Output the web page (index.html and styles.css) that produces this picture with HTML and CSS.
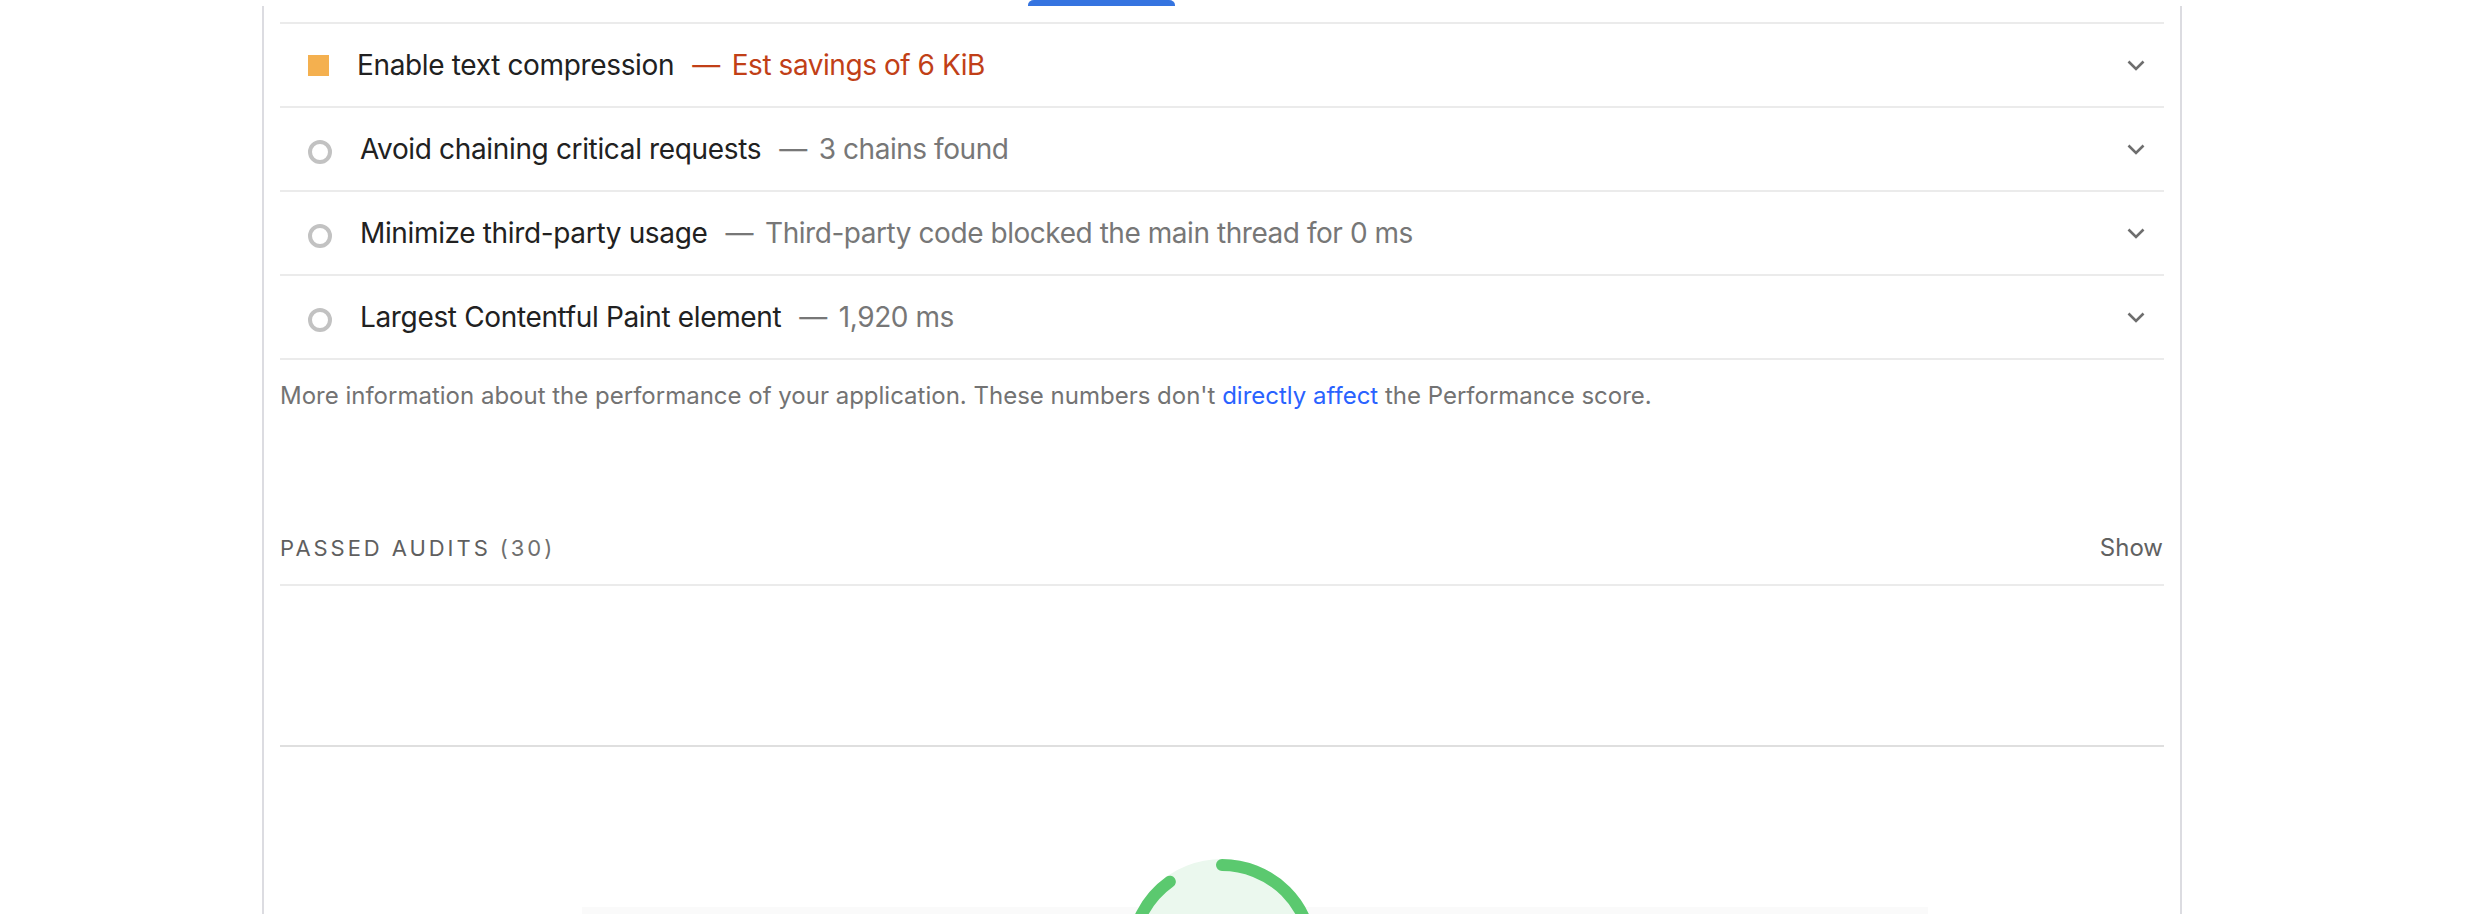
FILE: index.html
```html
<!DOCTYPE html>
<html lang="en">
<head>
<meta charset="utf-8">
<title>Lighthouse report – diagnostics</title>
<link rel="stylesheet" href="styles.css">
</head>
<body>
<div class="tabbar"><div class="tab-indicator"></div></div>
<div class="report">
  <div class="audit-list">
    <div class="audit">
      <span class="icon-square"></span>
      <span class="audit-title">Enable text compression</span><span class="display warn"><span class="dash">—</span>Est savings of 6 KiB</span>
      <svg class="chevron" width="18" height="11" viewBox="0 0 18 11"><polyline points="1.5,1.5 9,9 16.5,1.5"/></svg>
    </div>
    <div class="audit">
      <span class="icon-circle"></span>
      <span class="audit-title">Avoid chaining critical requests</span><span class="display"><span class="dash">—</span>3 chains found</span>
      <svg class="chevron" width="18" height="11" viewBox="0 0 18 11"><polyline points="1.5,1.5 9,9 16.5,1.5"/></svg>
    </div>
    <div class="audit">
      <span class="icon-circle"></span>
      <span class="audit-title">Minimize third-party usage</span><span class="display"><span class="dash">—</span>Third-party code blocked the main thread for 0 ms</span>
      <svg class="chevron" width="18" height="11" viewBox="0 0 18 11"><polyline points="1.5,1.5 9,9 16.5,1.5"/></svg>
    </div>
    <div class="audit">
      <span class="icon-circle"></span>
      <span class="audit-title">Largest Contentful Paint element</span><span class="display"><span class="dash">—</span>1,920 ms</span>
      <svg class="chevron" width="18" height="11" viewBox="0 0 18 11"><polyline points="1.5,1.5 9,9 16.5,1.5"/></svg>
    </div>
  </div>
  <p class="group-description">More information about the performance of your application. These numbers don't <a class="link" href="#">directly affect</a> the Performance score.</p>
  <div class="clump-header">
    <span class="clump-title">Passed audits <span class="clump-count">(30)</span></span>
    <span class="clump-toggle">Show</span>
  </div>
  <div class="section-divider"></div>
  <div class="category-header">
    <div class="faint-band"></div>
    <svg class="gauge" width="192" height="192" viewBox="0 0 192 192">
      <circle class="gauge-base" cx="96" cy="96" r="90"/>
      <circle class="gauge-arc" cx="96" cy="96" r="90" transform="rotate(-90 96 96)" stroke-dasharray="509 566"/>
    </svg>
  </div>
</div>
</body>
</html>
```
FILE: styles.css
```css
html, body {
  margin: 0;
  padding: 0;
  background: #ffffff;
  height: 914px;
  overflow: hidden;
}

body {
  font-family: Inter, Roboto, "Liberation Sans", Arial, sans-serif;
  color: #212121;
}

.tabbar {
  height: 6px;
  display: flex;
}

.tab-indicator {
  margin-left: 1028px;
  width: 147px;
  height: 6px;
  background: #3574e0;
  border-top-left-radius: 6px 5px;
  border-top-right-radius: 6px 5px;
}

.report {
  margin-left: 262px;
  width: 1884px;
  padding: 16px 16px 0;
  border-left: 2px solid #dcdce1;
  border-right: 2px solid #dcdce1;
  min-height: 900px;
}

.audit-list {
  border-top: 2px solid #ebebeb;
}

.audit {
  display: flex;
  align-items: center;
  height: 82px;
  border-bottom: 2px solid #ebebeb;
  padding-left: 28px;
  font-size: 28px;
  white-space: nowrap;
}

.icon-square {
  width: 21px;
  height: 21px;
  background: #f4b04f;
  margin-right: 28px;
  flex: none;
}

.icon-circle {
  width: 16px;
  height: 16px;
  border: 4px solid #c2c2c2;
  border-radius: 50%;
  margin-right: 28px;
  margin-top: 5px;
  flex: none;
}

.audit-title {
  color: #212121;
  letter-spacing: -0.35px;
}

.display {
  color: #777777;
  letter-spacing: -0.45px;
}

.display.warn {
  color: #c13f17;
}

.dash {
  margin-left: 18px;
  margin-right: 12px;
}

.chevron {
  margin-left: auto;
  margin-right: 19px;
  fill: none;
  stroke: #6e6e6e;
  stroke-width: 2.6;
  flex: none;
}

.group-description {
  margin: 18px 0 0;
  font-size: 24px;
  line-height: 36px;
  color: #737373;
}

.link {
  color: #2962ff;
  text-decoration: none;
}

.clump-header {
  display: flex;
  align-items: baseline;
  justify-content: space-between;
  margin-top: 116px;
  padding-bottom: 18px;
  line-height: 36px;
  border-bottom: 2px solid #ebebeb;
}

.clump-title {
  font-size: 22px;
  letter-spacing: 2.95px;
  text-transform: uppercase;
  color: #5f5f5f;
}

.clump-count {
  color: #6f6f6f;
}

.clump-toggle {
  font-size: 24px;
  color: #616161;
  margin-right: 1px;
}

.section-divider {
  margin-top: 159px;
  height: 2px;
  background: #dfdfdf;
}

.category-header {
  display: grid;
  margin-top: 112px;
}

.faint-band {
  grid-area: 1 / 1;
  align-self: start;
  margin: 48px 236px 0 302px;
  height: 40px;
  background: #fafafa;
}

.gauge {
  grid-area: 1 / 1;
  justify-self: center;
  display: block;
}

.gauge-base {
  fill: #ebf8ee;
  stroke: #ebf8ee;
  stroke-width: 12;
}

.gauge-arc {
  fill: none;
  stroke: #5bc96f;
  stroke-width: 12;
  stroke-linecap: round;
}
```
